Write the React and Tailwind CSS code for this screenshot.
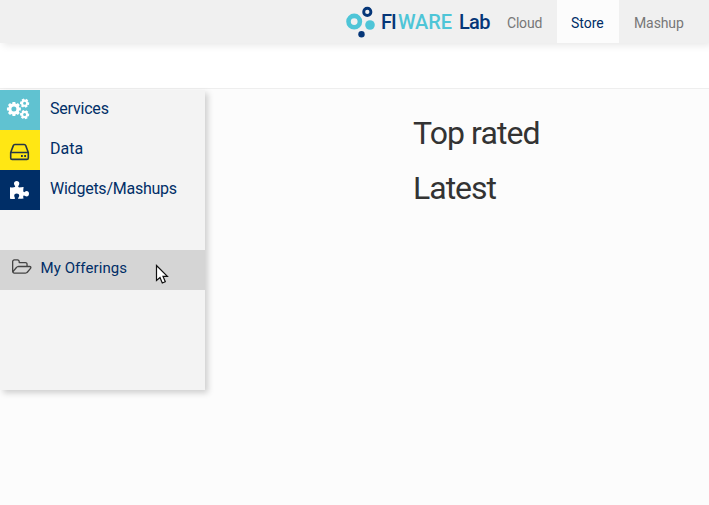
import React from 'react';

function gearPath(cx, cy, outer, inner, hole, teeth, turn) {
  const points = [];
  const step = (Math.PI * 2) / teeth;
  for (let i = 0; i < teeth; i++) {
    const a = i * step + turn;
    [[-0.36, inner], [-0.26, outer], [0.26, outer], [0.36, inner]].forEach(([offset, r]) => {
      points.push(`${(cx + r * Math.cos(a + offset * step)).toFixed(2)} ${(cy + r * Math.sin(a + offset * step)).toFixed(2)}`);
    });
  }
  return `M${points.join('L')}ZM${cx - hole} ${cy}a${hole} ${hole} 0 1 0 ${hole * 2} 0a${hole} ${hole} 0 1 0 ${-hole * 2} 0Z`;
}

function CogsIcon() {
  return (
    <svg className="block size-10" viewBox="0 0 40 40" fill="#fff" fillRule="evenodd">
      <path d={gearPath(13.9, 19, 7.1, 5.6, 2.5, 8, 0)} />
      <path d={gearPath(24.6, 13.2, 4.7, 3.6, 1.5, 6, 0.1)} />
      <path d={gearPath(24.6, 24.6, 4.7, 3.6, 1.5, 6, 0.1)} />
    </svg>
  );
}

function DriveIcon() {
  return (
    <svg className="block size-10" viewBox="0 0 40 40" fill="none" stroke="#263746" strokeWidth="1.6" strokeLinejoin="round">
      <path d="M10.7 22.5 13.3 15.6Q13.7 14.5 14.8 14.5H24.2Q25.3 14.5 25.7 15.6L28.3 22.5V28Q28.3 29.4 26.9 29.4H12.1Q10.7 29.4 10.7 28ZM10.7 22.5H28.3" />
      <path d="M21 26H22.8M24.2 26H26" strokeWidth="1.8" />
    </svg>
  );
}

function PuzzleIcon() {
  return (
    <svg className="block size-10" viewBox="0 0 40 40" fill="#fff">
      <path d="M10 17.2Q13.2 17.7 14.9 17.1C16 16.5 14 15.3 14 13.5C14 11.9 15.1 11 16.7 11C18.3 11 19.3 11.9 19.3 13.5C19.3 15.2 17.8 16.1 18.3 17C18.8 17.8 22.5 17.1 23.6 17C23.4 18.8 22.9 21.5 23.7 22.1C24.6 22.7 25.3 21.1 26.6 21.1C28.1 21.1 29 22.2 29 23.8C29 25.4 28.1 26.5 26.6 26.5C25.3 26.5 24.4 25.1 23.7 25.6C22.9 26.2 23.3 27.6 23.6 28.6Q20.5 29 18.6 28.8C17.2 28.5 19.2 27.1 19.2 25.7C19.2 24.3 18.2 23.5 16.7 23.5C15.3 23.5 14.2 24.3 14.2 25.7C14.2 27.2 15.8 28.2 14.8 28.8Q13.8 29.2 10 28.8Z" />
    </svg>
  );
}

function FolderIcon() {
  return (
    <svg className="ml-[12px] block h-[15px] w-[19.5px]" viewBox="0 0 1909 1408" fill="#444">
      <path d="M1781 803q0-35-53-35H640q-40 0-85.5 21.5T483 842l-294 363q-18 24-18 40 0 35 53 35h1088q40 0 86-22t71-53l294-363q18-22 18-39zM640 640h768V480q0-40-28-68t-68-28H736q-40 0-68-28t-28-68v-64q0-40-28-68t-68-28H224q-40 0-68 28t-28 68v853l256-315q44-53 116-87.5T640 640zm1269 163q0 62-46 120l-295 363q-43 53-116 87.5t-140 34.5H224q-92 0-158-66T0 1184V224q0-92 66-158T224 0h320q92 0 158 66t66 158v32h544q92 0 158 66t66 158v160h192q54 0 99 24.5t67 70.5q15 32 15 68z" />
    </svg>
  );
}

function Logo() {
  return (
    <div className="flex h-[43px] w-[146px] shrink-0">
      <svg className="h-[43px] w-[35px] shrink-0" viewBox="0 0 35 43" fill="none">
        <circle cx="8.2" cy="21.6" r="5.7" stroke="#4ec5d7" strokeWidth="4.6" />
        <circle cx="21.3" cy="11.9" r="3.6" stroke="#053678" strokeWidth="2.9" />
        <circle cx="24" cy="25" r="4.8" fill="#4ec5d7" />
        <circle cx="15.5" cy="34.2" r="3.2" fill="#053678" />
      </svg>
      <div className="flex pt-[10px] text-[20px] leading-6 font-medium whitespace-nowrap text-[#053678]">
        <span className="w-[17px] tracking-[-0.9px]">FI</span>
        <span className="w-[61px] tracking-[-0.1px] text-[#4ec5d7]">WARE</span>
        <span className="tracking-[-0.7px]">Lab</span>
      </div>
    </div>
  );
}

function CategoryRow({ icon, label, color, spacing }) {
  return (
    <a className="flex h-10">
      <span className={`size-10 shrink-0 ${color}`}>{icon}</span>
      <span className={`pt-[7px] pl-[10px] leading-6 whitespace-nowrap ${spacing}`}>{label}</span>
    </a>
  );
}

export default function App() {
  return (
    <div className="relative flex h-[505px] w-[709px] flex-col overflow-hidden bg-[#fcfcfc] font-[Roboto,sans-serif] text-[#333]">
      <header className="z-10 flex h-[43px] shrink-0 bg-[#f0f0f0] pl-[346px] shadow-[3px_2px_8px_rgba(0,0,0,0.1)]">
        <Logo />
        <nav className="flex text-[14px] leading-[46px] text-[#777]">
          <a className="w-[65px] pl-[15px] tracking-[-0.2px]">Cloud</a>
          <a className="w-[62px] bg-[#fcfcfc] pl-[14px] text-[#002e67]">Store</a>
          <a className="w-[75px] pl-[15px] tracking-[-0.1px]">Mashup</a>
        </nav>
      </header>
      <div className="h-[46px] shrink-0 border-b border-[#eee] bg-white" />
      <div className="flex flex-1">
        <aside className="mt-px h-[300px] w-[205px] shrink-0 bg-[#f3f3f3] text-[16px] text-[#002e67] shadow-[3px_3px_6px_rgba(0,0,0,0.18)]">
          <CategoryRow icon={<CogsIcon />} label="Services" color="bg-[#60c2d1]" spacing="tracking-[-0.2px]" />
          <CategoryRow icon={<DriveIcon />} label="Data" color="bg-[#ffe714]" spacing="tracking-[0px]" />
          <CategoryRow icon={<PuzzleIcon />} label="Widgets/Mashups" color="bg-[#002e67]" spacing="tracking-[-0.24px]" />
          <a className="mt-10 flex h-10 bg-[#d5d5d5]">
            <span className="pt-[9px]"><FolderIcon /></span>
            <span className="pt-[6px] pl-[9px] text-[15px] leading-6 tracking-[0.08px] whitespace-nowrap">My Offerings</span>
          </a>
        </aside>
        <main className="pt-[24px] pl-[208px] text-[32px] leading-10 whitespace-nowrap">
          <h2 className="tracking-[-0.9px]">Top rated</h2>
          <h2 className="mt-[15px] tracking-[-1px]">Latest</h2>
        </main>
      </div>
      <svg className="absolute top-[264px] left-[155px] h-[23px] w-[15px]" viewBox="0 0 15 23">
        <path d="M1.5 1.5V16.5L5 13.5 7.3 19 10.3 17.7 8 12.3H12.4Z" fill="#fff" stroke="#111" strokeWidth="1.2" />
      </svg>
    </div>
  );
}
